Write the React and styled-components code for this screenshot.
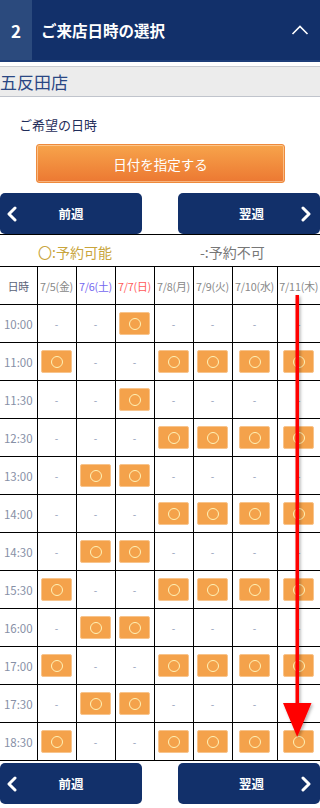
import React from "react";
import styled, { createGlobalStyle } from "styled-components";

const Global = createGlobalStyle`
  html, body { margin: 0; padding: 0; background: #fff; }
  body { font-family: "Noto Sans CJK JP", "Noto Sans", sans-serif; width: 320px; }
  * { box-sizing: border-box; }
`;

const Page = styled.div`
  position: relative;
  width: 320px;
  background: #fff;
`;

const Header = styled.div`
  display: flex;
  align-items: stretch;
  height: 62px;
  background: #12306a;
  border-bottom: 2px solid #1d3d78;
`;

const StepNo = styled.div`
  width: 32px;
  background: #2b4a7d;
  color: #fff;
  font-weight: 700;
  font-size: 17px;
  display: flex;
  align-items: center;
  justify-content: center;
`;

const HeaderTitle = styled.div`
  flex: 1;
  color: #fff;
  font-weight: 700;
  font-size: 15.5px;
  display: flex;
  align-items: center;
  padding-left: 9px;
`;

const HeaderIcon = styled.div`
  width: 40px;
  display: flex;
  align-items: center;
  justify-content: center;
`;

const StoreBar = styled.div`
  margin-top: 4px;
  height: 31px;
  background: #ececec;
  border-top: 1px solid #c9cbd0;
  border-bottom: 1px solid #c0c4cc;
  color: #2a4784;
  font-size: 17px;
  line-height: 29px;
`;

const Label = styled.div`
  color: #1f2d5a;
  font-size: 13px;
  padding: 19px 0 0 19px;
  line-height: 18px;
`;

const DateButtonRow = styled.div`
  display: flex;
  justify-content: center;
  padding: 10px 0;
`;

const DateButton = styled.div`
  width: 249px;
  height: 39px;
  margin-left: 1px;
  border-radius: 3px;
  background: linear-gradient(#f7a44b, #ec7832);
  border: 1px solid #ee8a3c;
  box-shadow: inset 0 0 0 1px rgba(255, 220, 180, 0.6);
  color: #fff;
  font-size: 13.5px;
  display: flex;
  align-items: center;
  justify-content: center;
`;

const NavRow = styled.div`
  display: flex;
  justify-content: space-between;
  height: ${(p) => p.$h}px;
  padding-top: ${(p) => p.$top}px;
`;

const NavButton = styled.div`
  width: 142px;
  height: 41px;
  background: #12306a;
  border-radius: 5px;
  color: #fff;
  font-weight: 700;
  font-size: 12.5px;
  position: relative;
  display: flex;
  align-items: center;
  justify-content: center;
`;

const NavText = styled.span`
  margin-left: ${(p) => (p.$next ? 5 : 0)}px;
`;

const Chevron = styled.svg`
  position: absolute;
  top: 13px;
  ${(p) => (p.$next ? "right: 8px;" : "left: 6px;")}
`;

const Legend = styled.div`
  display: flex;
  height: 32px;
  border-top: 1px solid #000;
  align-items: center;
  font-size: 14px;
  padding-top: 2px;
`;

const LegendItem = styled.div`
  color: ${(p) => p.$color};
  margin-left: ${(p) => p.$ml}px;
`;

const Table = styled.table`
  border-collapse: collapse;
  table-layout: fixed;
  width: 320px;
  border-top: 1px solid #000;
`;

const Th = styled.th`
  height: 38px;
  font-weight: 400;
  font-size: 10.8px;
  color: ${(p) => p.$color || "#888"};
  border-left: ${(p) => (p.$first ? "none" : "1px solid #000")};
  border-bottom: 1px solid #000;
  padding: 0;
  text-align: center;
  white-space: nowrap;
  letter-spacing: -0.2px;
`;

const Td = styled.td`
  height: 38px;
  border-left: ${(p) => (p.$first ? "none" : "1px solid #000")};
  border-bottom: 1px solid #000;
  padding: 0;
  text-align: center;
  vertical-align: middle;
  font-size: ${(p) => (p.$first ? "11.5px" : "10px")};
  color: ${(p) => (p.$first ? "#8790a6" : "#8c9ab5")};
`;

const Slot = styled.span`
  display: inline-flex;
  width: 31px;
  height: 23px;
  border-radius: 2px;
  background: #f4a24b;
  border: 1px solid #f8c48c;
  align-items: center;
  justify-content: center;
  vertical-align: middle;
`;

const Ring = styled.span`
  width: 12px;
  height: 12px;
  border-radius: 50%;
  border: 1.3px solid #fff3b8;
`;

const Arrow = styled.svg`
  position: absolute;
  left: 280px;
  top: 295px;
  pointer-events: none;
  overflow: visible;
`;

const dates = [
  { t: "7/5(金)" },
  { t: "7/6(土)", c: "#7467f0" },
  { t: "7/7(日)", c: "#ff5b5b" },
  { t: "7/8(月)" },
  { t: "7/9(火)" },
  { t: "7/10(水)" },
  { t: "7/11(木)" },
];

const rows = [
  ["10:00", "0010000"],
  ["11:00", "1001111"],
  ["11:30", "0010000"],
  ["12:30", "0001111"],
  ["13:00", "0110000"],
  ["14:00", "0001111"],
  ["14:30", "0110000"],
  ["15:30", "1001111"],
  ["16:00", "0110000"],
  ["17:00", "1001111"],
  ["17:30", "0110000"],
  ["18:30", "1001111"],
];

const widths = [37, 39, 39, 39, 39, 39, 45, 43];

function Nav({ top, h }) {
  return (
    <NavRow $top={top} $h={h}>
      <NavButton>
        <Chevron width="12" height="16" viewBox="0 0 12 16" fill="none">
          <path d="M9 2 L3 8 L9 14" stroke="#fff" strokeWidth="3" strokeLinecap="round" strokeLinejoin="round" />
        </Chevron>
        <NavText>前週</NavText>
      </NavButton>
      <NavButton $next>
        <NavText $next>翌週</NavText>
        <Chevron $next width="12" height="16" viewBox="0 0 12 16" fill="none">
          <path d="M3 2 L9 8 L3 14" stroke="#fff" strokeWidth="3" strokeLinecap="round" strokeLinejoin="round" />
        </Chevron>
      </NavButton>
    </NavRow>
  );
}

export default function App() {
  return (
    <Page>
      <Global />
      <Header>
        <StepNo>2</StepNo>
        <HeaderTitle>ご来店日時の選択</HeaderTitle>
        <HeaderIcon>
          <svg width="18" height="10" viewBox="0 0 18 10" fill="none">
            <path d="M1.5 9 L9 1.5 L16.5 9" stroke="#fff" strokeWidth="1.6" />
          </svg>
        </HeaderIcon>
      </Header>
      <StoreBar>五反田店</StoreBar>
      <Label>ご希望の日時</Label>
      <DateButtonRow>
        <DateButton>日付を指定する</DateButton>
      </DateButtonRow>
      <Nav top={0} h={41} />
      <Legend>
        <LegendItem $color="#c9a53c" $ml={38}>〇:予約可能</LegendItem>
        <LegendItem $color="#777" $ml={88}>-:予約不可</LegendItem>
      </Legend>
      <Table>
        <colgroup>
          {widths.map((w, i) => (
            <col key={i} style={{ width: w }} />
          ))}
        </colgroup>
        <thead>
          <tr>
            <Th $first $color="#5b6278">日時</Th>
            {dates.map((d) => (
              <Th key={d.t} $color={d.c}>{d.t}</Th>
            ))}
          </tr>
        </thead>
        <tbody>
          {rows.map(([time, pat]) => (
            <tr key={time}>
              <Td $first>{time}</Td>
              {pat.split("").map((v, i) => (
                <Td key={i}>
                  {v === "1" ? (
                    <Slot>
                      <Ring />
                    </Slot>
                  ) : (
                    "-"
                  )}
                </Td>
              ))}
            </tr>
          ))}
        </tbody>
      </Table>
      <Nav top={2} h={43} />
      <Arrow width="36" height="445" viewBox="0 0 36 445">
        <defs>
          <filter id="sh" x="-50%" y="-5%" width="200%" height="110%">
            <feDropShadow dx="1.5" dy="1.5" stdDeviation="1.5" floodColor="#000" floodOpacity="0.3" />
          </filter>
        </defs>
        <g filter="url(#sh)">
          <rect x="15.5" y="0" width="3.5" height="416" fill="#ff0000" />
          <polygon points="3,408 31.5,408 17.2,442" fill="#ff0000" />
        </g>
      </Arrow>
    </Page>
  );
}
